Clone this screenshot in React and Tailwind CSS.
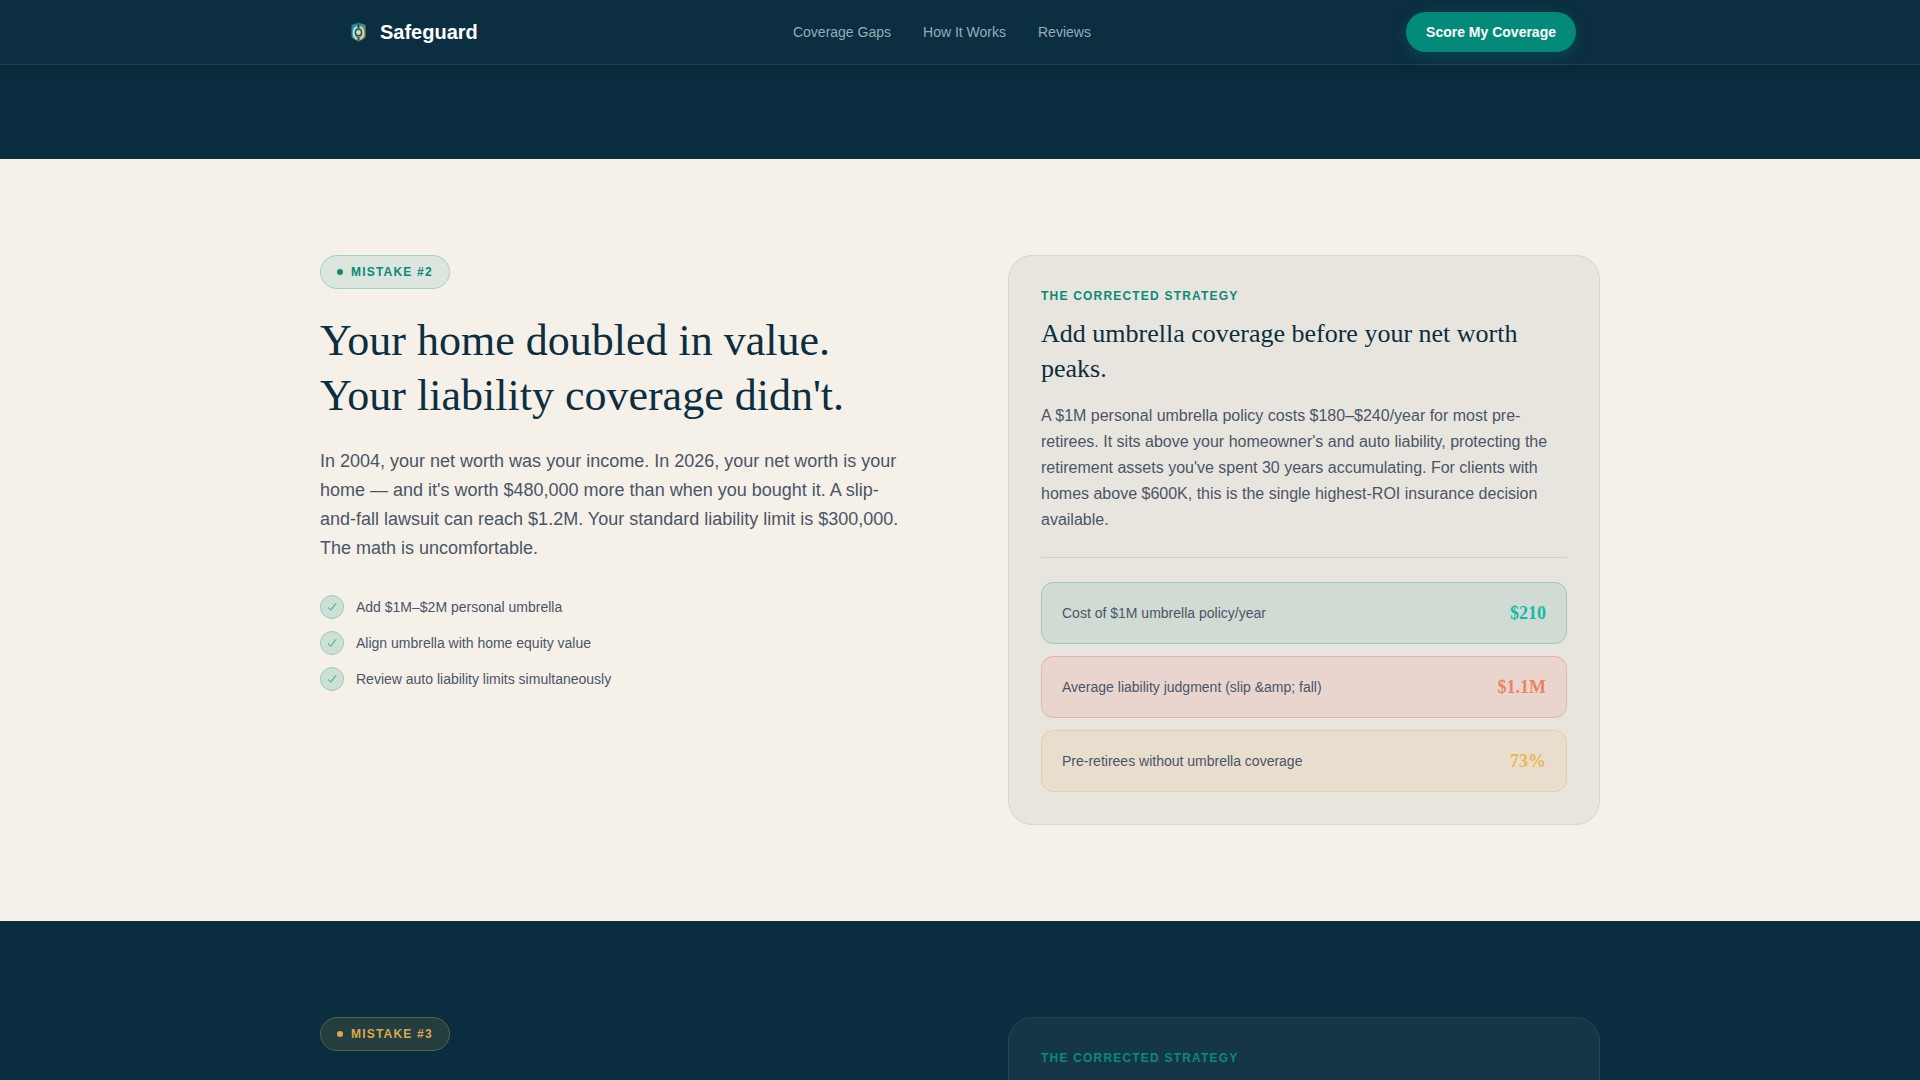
const NAV_LINKS = [
  { label: "Coverage Gaps", href: "#gaps" },
  { label: "How It Works", href: "#how" },
  { label: "Reviews", href: "#reviews" },
];

const ACTIONS = [
  "Add $1M–$2M personal umbrella",
  "Align umbrella with home equity value",
  "Review auto liability limits simultaneously",
];

const STATS = [
  {
    label: "Cost of $1M umbrella policy/year",
    value: "$210",
    box: "border-[#9fc7ba] bg-[#d0dbd4]",
    text: "text-[#12bba8]",
  },
  {
    label: "Average liability judgment (slip &amp; fall)",
    value: "$1.1M",
    box: "border-[#e4b3a9] bg-[#e9d5ce]",
    text: "text-[#ec845e]",
  },
  {
    label: "Pre-retirees without umbrella coverage",
    value: "73%",
    box: "border-[#e3cf9f] bg-[#e8decd]",
    text: "text-[#edb654]",
  },
];

function LogoMark() {
  return (
    <svg viewBox="0 0 28 28" className="size-7" aria-hidden="true">
      <defs>
        <linearGradient id="shield" x1="0" y1="0" x2="1" y2="1">
          <stop offset="0.3" stopColor="#2a8b99" />
          <stop offset="1" stopColor="#b39c5e" />
        </linearGradient>
      </defs>
      <path
        d="M14.500 4.500 L21.500 7 V18 C21.500 20 18.500 21.500 14.500 23.500 C10.500 21.500 7.500 20 7.500 18 V7 Z"
        fill="url(#shield)"
      />
      <path d="M13 8.800 C8.500 10.500 8.500 19 13 20.800" fill="none" stroke="#c3dfd6" strokeWidth="1.800" />
      <path d="M16 8.800 C20.500 10.500 20.500 19 16 20.800" fill="none" stroke="#ddd3a4" strokeWidth="1.800" />
      <circle cx="14.500" cy="14.500" r="3" fill="#d9dccb" stroke="#1d4a58" strokeWidth="1.200" />
      <path d="M14.500 4 V10 M14.500 19 V24" stroke="#14556a" strokeWidth="1.200" />
    </svg>
  );
}

function Header() {
  return (
    <header className="relative z-10 shrink-0 border-b border-[#21404d] bg-[#0b2e40] shadow-[0_4px_24px_rgba(0,0,0,0.2)]">
      <div className="mx-auto flex h-16 max-w-7xl items-center justify-between px-6">
        <a href="#top" className="flex items-center gap-2 text-xl font-bold text-white">
          <LogoMark />
          Safeguard
        </a>
        <nav className="flex gap-8 text-sm text-[#93adb8]">
          {NAV_LINKS.map((link) => (
            <a key={link.href} href={link.href}>
              {link.label}
            </a>
          ))}
        </nav>
        <button
          type="button"
          className="h-10 rounded-full bg-[#048a78] px-5 text-sm font-bold text-white shadow-[0_4px_16px_rgba(0,137,123,0.3)]"
        >
          Score My Coverage
        </button>
      </div>
    </header>
  );
}

function Badge({ children, tone, dot }) {
  return (
    <div
      className={`inline-flex items-center gap-2 rounded-full border px-4 py-2 text-xs font-bold tracking-widest uppercase ${tone}`}
    >
      <span className={`size-1.5 rounded-full ${dot}`} />
      {children}
    </div>
  );
}

function CardLabel() {
  return (
    <p className="text-xs font-bold tracking-widest text-[#0a8a78] uppercase">
      The Corrected Strategy
    </p>
  );
}

function CheckItem({ children }) {
  return (
    <li className="flex items-center gap-3">
      <span className="flex size-6 shrink-0 items-center justify-center rounded-full border border-[#99cbb9] bg-[#cce1d6]">
        <svg viewBox="0 0 12 12" className="size-3" fill="none" aria-hidden="true">
          <path d="M2 6.500 L4.800 9.200 L10 2.300" stroke="#1d9280" strokeWidth="0.900" />
        </svg>
      </span>
      {children}
    </li>
  );
}

function MistakeTwo() {
  return (
    <section className="shrink-0 bg-[#f5f0e8] py-24">
      <div className="mx-auto grid max-w-7xl grid-cols-2 items-start gap-24">
        <div>
          <Badge tone="border-[#a8d0be] bg-[#dde6de] text-[#0a8a78]" dot="bg-[#0a8a78]">
            Mistake #2
          </Badge>
          <h2 className="mt-6 font-['Liberation_Serif',serif] text-[44px] leading-[55px] text-[#0b2e40]">
            Your home doubled in value.
            <br />
            Your liability coverage didn't.
          </h2>
          <p className="mt-6 text-lg leading-[29px] text-[#4a5568]">
            In 2004, your net worth was your income. In 2026, your net worth is your home — and
            it's worth $480,000 more than when you bought it. A slip-and-fall lawsuit can reach
            $1.2M. Your standard liability limit is $300,000. The math is uncomfortable.
          </p>
          <ul className="mt-8 flex flex-col gap-3 text-sm text-[#4a5568]">
            {ACTIONS.map((action) => (
              <CheckItem key={action}>{action}</CheckItem>
            ))}
          </ul>
        </div>

        <div className="rounded-3xl border border-[#d2d8d0] bg-[#e8e5de] p-8">
          <CardLabel />
          <h3 className="mt-3 font-['Liberation_Serif',serif] text-[26px] leading-[35px] text-[#0b2e40]">
            Add umbrella coverage before your net worth peaks.
          </h3>
          <p className="mt-[17px] text-base leading-[26px] text-[#4a5568]">
            A $1M personal umbrella policy costs $180–$240/year for most pre-retirees. It sits
            above your homeowner's and auto liability, protecting the retirement assets you've
            spent 30 years accumulating. For clients with homes above $600K, this is the single
            highest-ROI insurance decision available.
          </p>
          <dl className="mt-6 flex flex-col gap-3 border-t border-[#d0d2ce] pt-6">
            {STATS.map((stat) => (
              <div
                key={stat.label}
                className={`flex items-center justify-between rounded-xl border px-5 py-4 ${stat.box}`}
              >
                <dt className="text-sm text-[#4a5568]">{stat.label}</dt>
                <dd
                  className={`font-['Liberation_Serif',serif] text-lg leading-7 font-bold ${stat.text}`}
                >
                  {stat.value}
                </dd>
              </div>
            ))}
          </dl>
        </div>
      </div>
    </section>
  );
}

function MistakeThree() {
  return (
    <section className="flex-1 overflow-hidden bg-[#0a2e40] pt-24">
      <div className="mx-auto grid max-w-7xl grid-cols-2 items-start gap-24">
        <div>
          <Badge tone="border-[#5a6241] bg-[#243d3e] text-[#dda84b]" dot="bg-[#dda84b]">
            Mistake #3
          </Badge>
        </div>
        <div className="min-h-96 rounded-3xl border border-[#24444f] bg-[#153647] p-8">
          <CardLabel />
        </div>
      </div>
    </section>
  );
}

export default function App() {
  return (
    <div
      id="top"
      className="flex h-screen flex-col overflow-hidden bg-[#0a2e40] font-['Liberation_Sans',sans-serif]"
    >
      <Header />
      <main className="flex min-h-0 flex-1 flex-col pt-[94px]">
        <MistakeTwo />
        <MistakeThree />
      </main>
    </div>
  );
}
